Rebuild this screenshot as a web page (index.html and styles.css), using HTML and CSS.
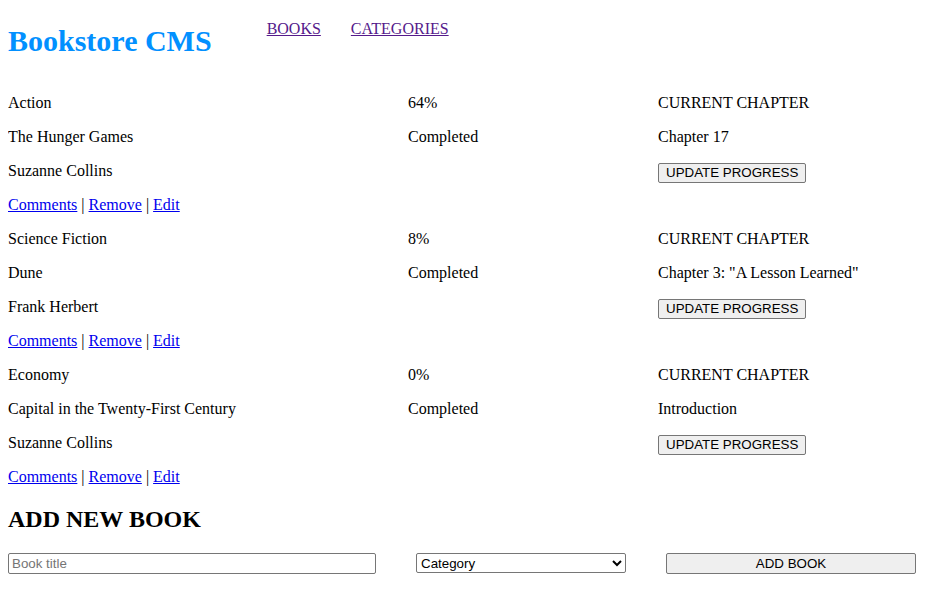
FILE: index.html
```html
<!DOCTYPE html>
<html lang="en">
<head>
<meta charset="utf-8">
<title>Bookstore CMS</title>
<link rel="stylesheet" href="styles.css">
</head>
<body>
<header class="header">
  <h1 class="logo">Bookstore CMS</h1>
  <nav>
    <ul class="nav-list">
      <li><a class="nav-link" href="#">BOOKS</a></li>
      <li><a class="nav-link" href="#">CATEGORIES</a></li>
    </ul>
  </nav>
</header>
<main>
  <section class="book-list">
    <article class="book">
      <p>Action</p><p>64%</p><p>CURRENT CHAPTER</p>
      <p>The Hunger Games</p><p>Completed</p><p>Chapter 17</p>
      <p>Suzanne Collins</p><p></p><p><button class="btn" type="button">UPDATE PROGRESS</button></p>
      <p class="actions"><a href="#">Comments</a> | <a href="#">Remove</a> | <a href="#">Edit</a></p>
    </article>
    <article class="book">
      <p>Science Fiction</p><p>8%</p><p>CURRENT CHAPTER</p>
      <p>Dune</p><p>Completed</p><p>Chapter 3: "A Lesson Learned"</p>
      <p>Frank Herbert</p><p></p><p><button class="btn" type="button">UPDATE PROGRESS</button></p>
      <p class="actions"><a href="#">Comments</a> | <a href="#">Remove</a> | <a href="#">Edit</a></p>
    </article>
    <article class="book">
      <p>Economy</p><p>0%</p><p>CURRENT CHAPTER</p>
      <p>Capital in the Twenty-First Century</p><p>Completed</p><p>Introduction</p>
      <p>Suzanne Collins</p><p></p><p><button class="btn" type="button">UPDATE PROGRESS</button></p>
      <p class="actions"><a href="#">Comments</a> | <a href="#">Remove</a> | <a href="#">Edit</a></p>
    </article>
  </section>
  <section class="add-book">
    <h2 class="add-title">ADD NEW BOOK</h2>
    <form class="add-form">
      <input class="input-title" type="text" placeholder="Book title">
      <select class="input-category">
        <option>Category</option>
        <option>Action</option>
        <option>Science Fiction</option>
        <option>Economy</option>
      </select>
      <button class="btn btn-add" type="button">ADD BOOK</button>
    </form>
  </section>
</main>
</body>
</html>
```

FILE: styles.css
```css
body {
  margin: 8px;
  font-family: "Liberation Serif", "Times New Roman", serif;
  font-size: 16px;
  color: #000;
  background: #fff;
}

.header {
  display: flex;
  align-items: flex-start;
  gap: 55px;
}

.logo {
  margin: 16px 0 0;
  font-size: 30px;
  color: #0290ff;
}

.nav-list {
  display: flex;
  gap: 30px;
  list-style: none;
  margin: 12px 0 0;
  padding: 0;
}

.nav-link {
  color: #551a8b;
}

.book-list {
  display: flex;
  flex-direction: column;
  gap: 16px;
  margin-top: 36px;
}

.book {
  display: grid;
  grid-template-columns: 400px 250px 1fr;
  grid-auto-rows: 18px;
  row-gap: 16px;
}

.book p {
  margin: 0;
  height: 18px;
  line-height: 18px;
  display: flex;
  align-items: center;
}

.book .actions {
  grid-column: 1 / -1;
  display: block;
}

.actions a {
  color: #0000ee;
}

.btn {
  font-family: "Liberation Sans", Arial, sans-serif;
  font-size: 13.33px;
  padding: 1px 7px;
  border: 1px solid #767676;
  border-radius: 2px;
  background: #efefef;
  color: #000;
  height: 20px;
  line-height: 16px;
  flex-shrink: 0;
}

.book .btn {
  margin-top: 3px;
}

.add-title {
  font-size: 24px;
  margin: 20px 0 20px;
}

.add-form {
  display: flex;
  gap: 40px;
  align-items: flex-start;
}

.input-title {
  width: 368px;
  height: 21px;
  box-sizing: border-box;
  font-family: "Liberation Sans", Arial, sans-serif;
  font-size: 13.33px;
  border: 1px solid #767676;
  border-radius: 2px;
  padding: 1px 3px;
}

.input-title::placeholder {
  color: #757575;
}

.input-category {
  width: 210px;
  height: 20px;
  box-sizing: border-box;
  font-family: "Liberation Sans", Arial, sans-serif;
  font-size: 13.33px;
  border: 1px solid #767676;
  border-radius: 2px;
  background: #fff;
}

.btn-add {
  width: 250px;
  height: 21px;
}
```
